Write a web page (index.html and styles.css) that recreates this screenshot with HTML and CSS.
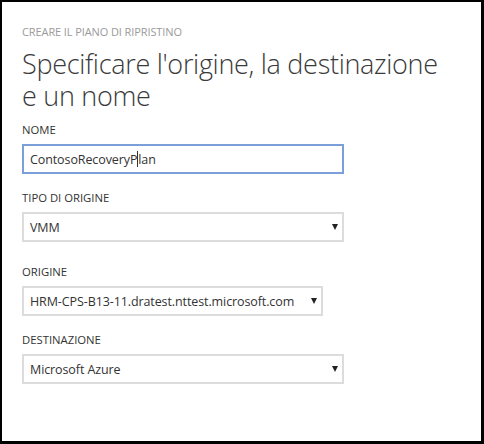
FILE: index.html
```html
<!DOCTYPE html>
<html lang="it">
<head>
<meta charset="utf-8">
<link rel="stylesheet" href="styles.css">
</head>
<body>
<div class="frame">
  <div class="wizard">
    <div class="eyebrow">CREARE IL PIANO DI RIPRISTINO</div>
    <h1 class="title">Specificare l'origine, la destinazione e un nome</h1>
    <div class="field field-name">
      <label class="label">NOME</label>
      <div class="input focused"><span>ContosoRecoveryP</span><span class="caret"></span><span>lan</span></div>
    </div>
    <div class="field">
      <label class="label">TIPO DI ORIGINE</label>
      <div class="select wide"><span>VMM</span><span class="arrow"></span></div>
    </div>
    <div class="field field-source">
      <label class="label">ORIGINE</label>
      <div class="select narrow"><span>HRM-CPS-B13-11.dratest.nttest.microsoft.com</span><span class="arrow"></span></div>
    </div>
    <div class="field">
      <label class="label">DESTINAZIONE</label>
      <div class="select wide"><span>Microsoft Azure</span><span class="arrow"></span></div>
    </div>
  </div>
</div>
</body>
</html>
```
FILE: styles.css
```css
html, body {
  margin: 0;
  padding: 0;
  background: #fff;
}
.frame {
  width: 484px;
  height: 444px;
  box-sizing: border-box;
  border: 3px solid #000;
  border-top-width: 2px;
  border-left-width: 2px;
  background: #fff;
  font-family: "Open Sans", "Noto Sans", sans-serif;
  color: #333;
}
.wizard {
  padding: 23px 0 0 20px;
}
.eyebrow {
  font-size: 11px;
  color: #9a9a9a;
  line-height: 14px;
  letter-spacing: -0.1px;
}
.title {
  margin: 9px 0 0 0;
  font-size: 27px;
  font-weight: 300;
  line-height: 32px;
  color: #3a3a3a;
  width: 430px;
  letter-spacing: -0.3px;
}
.field {
  margin-top: 17px;
}
.field-name {
  margin-top: 11px;
}
.field-source {
  margin-top: 23px;
}
.label {
  display: block;
  font-size: 11.3px;
  line-height: 14px;
  color: #333;
  margin-bottom: 7px;
}
.input, .select {
  box-sizing: border-box;
  height: 30px;
  border: 2px solid #dcdcdc;
  display: flex;
  align-items: center;
  padding: 0 4px 0 6px;
  font-size: 12.5px;
  color: #333;
  letter-spacing: -0.1px;
}
.input {
  width: 322px;
}
.input.focused {
  border-color: #7a9fd9;
}
.caret {
  display: inline-block;
  width: 1px;
  height: 16px;
  background: #333;
}
.select {
  justify-content: space-between;
}
.wide {
  width: 322px;
}
.narrow {
  width: 301px;
}
.arrow {
  width: 0;
  height: 0;
  border-left: 3.5px solid transparent;
  border-right: 3.5px solid transparent;
  border-top: 6px solid #222;
}
```
